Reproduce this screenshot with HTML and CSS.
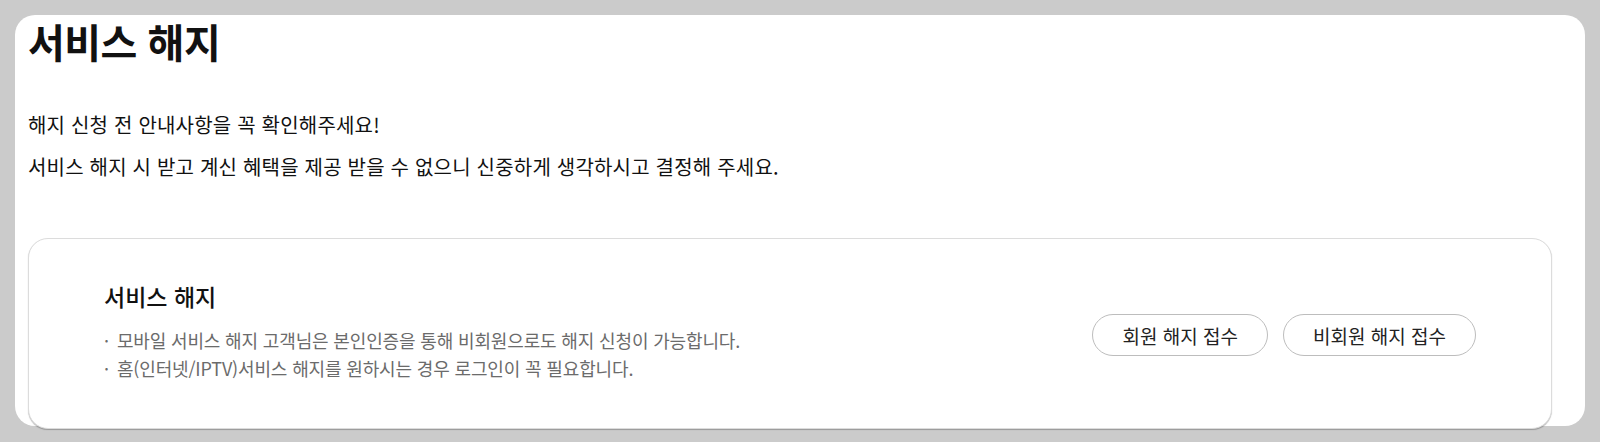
FILE: index.html
```html
<!DOCTYPE html>
<html lang="ko">
<head>
<meta charset="utf-8">
<title>서비스 해지</title>
<link rel="stylesheet" href="styles.css">
</head>
<body>
<main class="panel">
  <h1 class="page-title">서비스 해지</h1>
  <div class="notice">
    <p>해지 신청 전 안내사항을 꼭 확인해주세요!</p>
    <p>서비스 해지 시 받고 계신 혜택을 제공 받을 수 없으니 신중하게 생각하시고 결정해 주세요.</p>
  </div>
  <section class="card">
    <div class="card-info">
      <h2 class="card-title">서비스 해지</h2>
      <ul class="card-list">
        <li>모바일 서비스 해지 고객님은 본인인증을 통해 비회원으로도 해지 신청이 가능합니다.</li>
        <li>홈(인터넷/IPTV)서비스 해지를 원하시는 경우 로그인이 꼭 필요합니다.</li>
      </ul>
    </div>
    <div class="card-actions">
      <button class="btn" type="button">회원 해지 접수</button>
      <button class="btn" type="button">비회원 해지 접수</button>
    </div>
  </section>
</main>
</body>
</html>
```
FILE: styles.css
```css
html, body {
  margin: 0;
  padding: 0;
}
body {
  background: #cbcbcb;
  padding: 15px;
  font-family: "Noto Sans CJK KR", "Noto Sans", sans-serif;
  color: #111;
  box-sizing: border-box;
  height: 442px;
  overflow: hidden;
}
.panel {
  background: #fff;
  border-radius: 20px;
  height: 411px;
  padding: 4px 33px 0 13px;
  box-sizing: border-box;
}
.page-title {
  margin: 0;
  font-size: 40px;
  line-height: 44px;
  font-weight: 700;
  letter-spacing: -0.5px;
  color: #111;
}
.notice {
  margin-top: 41px;
}
.notice p {
  margin: 0;
  font-size: 20px;
  line-height: 42px;
  letter-spacing: 0.2px;
  color: #111;
}
.card {
  margin-top: 50px;
  height: 191px;
  box-sizing: border-box;
  border: 1px solid #dcdcdc;
  border-radius: 20px;
  box-shadow: 0 1px 1px rgba(0, 0, 0, 0.25);
  background: #fff;
  display: flex;
  align-items: flex-start;
  justify-content: space-between;
  padding: 42px 75px 0;
}
.card-title {
  margin: 0;
  font-size: 23px;
  line-height: 30px;
  font-weight: 500;
  letter-spacing: 0;
  color: #111;
}
.card-list {
  list-style: none;
  margin: 15px 0 0;
  padding: 0;
}
.card-list li {
  font-size: 18px;
  line-height: 28px;
  letter-spacing: -0.15px;
  color: #6b6b6b;
}
.card-list li::before {
  content: "·";
  margin-right: 8px;
}
.card-actions {
  display: flex;
  gap: 15px;
  margin-top: 33px;
}
.btn {
  font-family: "Noto Sans CJK KR", "Noto Sans", sans-serif;
  font-size: 19px;
  letter-spacing: 0;
  color: #222;
  background: #fff;
  border: 1px solid #bdbdbd;
  border-radius: 21px;
  height: 42px;
  padding: 0 29px;
  cursor: pointer;
}
```
